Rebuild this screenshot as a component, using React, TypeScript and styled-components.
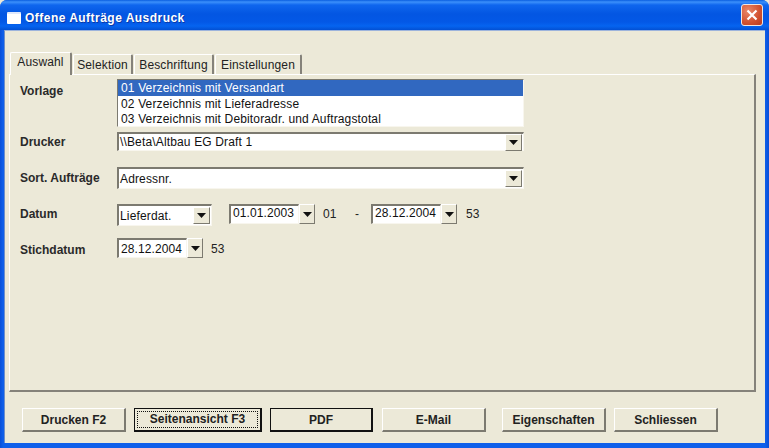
import styled, { createGlobalStyle } from 'styled-components';

const GlobalStyle = createGlobalStyle`
  html, body {
    margin: 0;
    padding: 0;
    background: #ece9d8;
  }
  body {
    font-family: "Liberation Sans", Arial, sans-serif;
    font-size: 12px;
    color: #111;
  }
`;

const TABS = [
  { label: 'Auswahl', width: 62 },
  { label: 'Selektion', width: 60 },
  { label: 'Beschriftung', width: 80 },
  { label: 'Einstellungen', width: 87 },
];
const VORLAGEN = [
  '01 Verzeichnis mit Versandart',
  '02 Verzeichnis mit Lieferadresse',
  '03 Verzeichnis mit Debitoradr. und Auftragstotal',
];
const BUTTONS = [
  { label: 'Drucken F2', width: 104, gap: 0 },
  { label: 'Seitenansicht F3', width: 128, gap: 8, focused: true },
  { label: 'PDF', width: 103, gap: 8, strong: true },
  { label: 'E-Mail', width: 104, gap: 9 },
  { label: 'Eigenschaften', width: 104, gap: 16 },
  { label: 'Schliessen', width: 104, gap: 8 },
];

const Arrow = () => (
  <svg width="9" height="5" viewBox="0 0 9 5">
    <path d="M0 0h9L4.5 5z" fill="#111" />
  </svg>
);

const App = () => {
  return (
    <Window>
      <GlobalStyle />
      <TitleBar>
        <TitleIcon />
        <Title>Offene Aufträge Ausdruck</Title>
        <CloseButton>
          <svg width="12" height="12" viewBox="0 0 12 12">
            <path d="M1.5 1.5l9 9M10.5 1.5l-9 9" stroke="#fff" strokeWidth="2.2" />
          </svg>
        </CloseButton>
      </TitleBar>
      <Client>
        <TabStrip>
          {TABS.map((tab, i) => (
            <Tab key={tab.label} $active={i === 0} $width={tab.width}>
              {tab.label}
            </Tab>
          ))}
        </TabStrip>
        <Panel>
          <Row $top={4} $height={48}>
            <Label $offset={5}>Vorlage</Label>
            <ListBox>
              {VORLAGEN.map((item, i) => (
                <ListItem key={item} $selected={i === 0}>
                  {item}
                </ListItem>
              ))}
            </ListBox>
          </Row>
          <Row $top={5} $height={19}>
            <Label $offset={3}>Drucker</Label>
            <Select $width={407} $height={19}>
              <SelectText>\\Beta\Altbau EG Draft 1</SelectText>
              <ArrowButton><Arrow /></ArrowButton>
            </Select>
          </Row>
          <Row $top={16} $height={22}>
            <Label $offset={4}>Sort. Aufträge</Label>
            <Select $width={407} $height={22}>
              <SelectText>Adressnr.</SelectText>
              <ArrowButton><Arrow /></ArrowButton>
            </Select>
          </Row>
          <Row $top={15} $height={22}>
            <Label $offset={3}>Datum</Label>
            <Select $width={95} $height={22}>
              <SelectText>Lieferdat.</SelectText>
              <ArrowButton><Arrow /></ArrowButton>
            </Select>
            <DateField $left={17}>
              <DateText>01.01.2003</DateText>
              <ArrowButton><Arrow /></ArrowButton>
            </DateField>
            <Value $left={8} $width={32}>01</Value>
            <Value $width={16}>-</Value>
            <DateField>
              <DateText>28.12.2004</DateText>
              <ArrowButton><Arrow /></ArrowButton>
            </DateField>
            <Value $left={9}>53</Value>
          </Row>
          <Row $top={12} $height={21}>
            <Label $offset={5}>Stichdatum</Label>
            <DateField>
              <DateText $drop={2}>28.12.2004</DateText>
              <ArrowButton><Arrow /></ArrowButton>
            </DateField>
            <Value $left={8} $top={4}>53</Value>
          </Row>
        </Panel>
        <ButtonBar>
          {BUTTONS.map((b) => (
            <ActionButton
              key={b.label}
              $width={b.width}
              $focused={b.focused}
              $strong={b.strong}
              $gap={b.gap}
            >
              {b.focused ? <FocusRing>{b.label}</FocusRing> : b.label}
            </ActionButton>
          ))}
        </ButtonBar>
      </Client>
    </Window>
  );
};

export default App;

const Window = styled.div`
  width: 769px;
  height: 448px;
  box-sizing: border-box;
  display: flex;
  flex-direction: column;
  overflow: hidden;
  padding: 0 4px 5px;
  background: linear-gradient(90deg, #0a4fd8 0, #0f5fea 3px, #0f5fea 765px, #0a4fd8 100%);
  border-radius: 7px 7px 0 0;
`;

const TitleBar = styled.div`
  height: 30px;
  box-sizing: border-box;
  flex: none;
  margin: 0 -4px;
  padding: 5px 7px 0 7px;
  display: flex;
  align-items: center;
  background: linear-gradient(180deg, #0a5ee0 0, #3c90fb 2px, #0f66ee 5px, #0356e2 14px, #0358e6 22px, #0564f0 26px, #0250d4 30px);
`;

const TitleIcon = styled.div`
  width: 14px;
  height: 10px;
  background: #fff;
  border-top: 2px solid #dfe8fb;
  border-radius: 1px;
`;

const Title = styled.div`
  margin-left: 4px;
  color: #fff;
  font-weight: 700;
  font-size: 12px;
  letter-spacing: 0.47px;
  text-shadow: 1px 1px 0 #0a3aa8;
`;

const CloseButton = styled.div`
  position: relative;
  top: -3px;
  left: 1px;
  margin-left: auto;
  width: 20px;
  height: 20px;
  display: flex;
  align-items: center;
  justify-content: center;
  border: 1px solid #f0e6e0;
  border-radius: 3px;
  background: radial-gradient(circle at 30% 30%, #e9886a, #d1512f 60%, #b93a1e);
`;

const Client = styled.div`
  flex: 1;
  display: flex;
  flex-direction: column;
  background: #ece9d8;
  padding: 21px 5px 0 5px;
  min-height: 0;
  border-top: 1px solid #9db4dc;
  border-left: 1px solid #6f8fc8;
`;

const TabStrip = styled.div`
  display: flex;
  height: 22px;
  flex: none;
  align-items: flex-end;
  position: relative;
  z-index: 1;
`;

const Tab = styled.div<{ $active?: boolean; $width: number }>`
  box-sizing: border-box;
  width: ${(p) => p.$width}px;
  height: ${(p) => (p.$active ? 23 : 20)}px;
  margin-bottom: ${(p) => (p.$active ? -1 : 0)}px;
  padding-top: ${(p) => (p.$active ? 2 : 3)}px;
  margin-right: 1px;
  text-align: center;
  font-size: 12px;
  letter-spacing: 0.15px;
  white-space: nowrap;
  color: #222;
  background: #ece9d8;
  border-top: 1px solid #fff;
  border-left: 1px solid #fff;
  border-right: 2px solid #85827a;
  border-radius: 2px 2px 0 0;
`;

const Panel = styled.div`
  flex: none;
  height: 318px;
  width: 747px;
  box-sizing: border-box;
  padding: 0 0 0 10px;
  border-top: 1px solid #fff;
  border-left: 1px solid #fff;
  border-right: 2px solid #85827a;
  border-bottom: 2px solid #85827a;
  margin-left: -1px;
`;

const Row = styled.div<{ $top: number; $height: number }>`
  display: flex;
  align-items: flex-start;
  margin-top: ${(p) => p.$top}px;
  height: ${(p) => p.$height}px;
`;

const Label = styled.div<{ $offset: number }>`
  width: 97px;
  flex: none;
  margin-top: ${(p) => p.$offset}px;
  font-weight: 700;
  font-size: 12px;
  color: #2a2a2a;
`;

const sunken = `
  box-sizing: border-box;
  background: #fff;
  border-top: 2px solid #7c7a70;
  border-left: 2px solid #7c7a70;
  border-right: 1px solid #f8f6ee;
  border-bottom: 1px solid #f8f6ee;
`;

const ListBox = styled.div`
  ${sunken}
  width: 407px;
  height: 48px;
  padding-top: 0;
  border-top-width: 1px;
  border-left-width: 1px;
`;

const ListItem = styled.div<{ $selected?: boolean }>`
  height: ${(p) => (p.$selected ? 16 : 15)}px;
  line-height: ${(p) => (p.$selected ? 17 : 16)}px;
  padding-left: 3px;
  font-size: 12px;
  letter-spacing: 0.15px;
  background: ${(p) => (p.$selected ? '#3168c0' : 'transparent')};
  color: ${(p) => (p.$selected ? '#fff' : '#111')};
`;

const Select = styled.div<{ $width: number; $height: number }>`
  ${sunken}
  width: ${(p) => p.$width}px;
  height: ${(p) => p.$height}px;
  display: flex;
  align-items: center;
  padding-right: 1px;
`;

const SelectText = styled.div`
  flex: 1;
  padding-left: 1px;
  font-size: 12px;
  letter-spacing: 0.15px;
  white-space: nowrap;
`;

const ArrowButton = styled.div`
  box-sizing: border-box;
  width: 17px;
  height: 17px;
  flex: none;
  display: flex;
  align-items: center;
  justify-content: center;
  background: #ece9d8;
  border-top: 1px solid #fff;
  border-left: 1px solid #fff;
  border-right: 1px solid #7c7a70;
  border-bottom: 1px solid #7c7a70;
`;

const DateField = styled.div<{ $left?: number }>`
  display: flex;
  align-items: flex-start;
  margin-left: ${(p) => p.$left ?? 0}px;
  height: 21px;
  flex: none;
`;

const DateText = styled.div<{ $drop?: number }>`
  ${sunken}
  width: 70px;
  height: 20px;
  padding-left: 2px;
  padding-top: ${(p) => p.$drop ?? 0}px;
  line-height: 15px;
  font-size: 12px;
  letter-spacing: 0.1px;
  white-space: nowrap;
  & + div {
    height: 20px;
    width: 16px;
  }
`;

const Value = styled.div<{ $left?: number; $width?: number; $top?: number }>`
  margin-left: ${(p) => p.$left ?? 0}px;
  margin-top: ${(p) => p.$top ?? 3}px;
  width: ${(p) => (p.$width ? `${p.$width}px` : 'auto')};
  font-size: 12px;
  color: #222;
  flex: none;
`;

const ButtonBar = styled.div`
  display: flex;
  padding: 16px 0 0 12px;
`;

const ActionButton = styled.div<{
  $width: number;
  $focused?: boolean;
  $strong?: boolean;
  $gap: number;
}>`
  box-sizing: border-box;
  width: ${(p) => p.$width}px;
  height: 24px;
  margin-left: ${(p) => p.$gap}px;
  display: flex;
  align-items: center;
  justify-content: center;
  font-weight: 700;
  font-size: 12px;
  color: #222;
  background: #ece9d8;
  border-style: solid;
  border-width: 1px 2px 2px 1px;
  border-color: ${(p) =>
    p.$focused || p.$strong ? '#111' : '#fff #7c7a70 #7c7a70 #fff'};
`;

const FocusRing = styled.div`
  width: 100%;
  margin: 2px;
  height: 17px;
  line-height: 15px;
  box-sizing: border-box;
  text-align: center;
  border: 1px dotted #111;
`;
